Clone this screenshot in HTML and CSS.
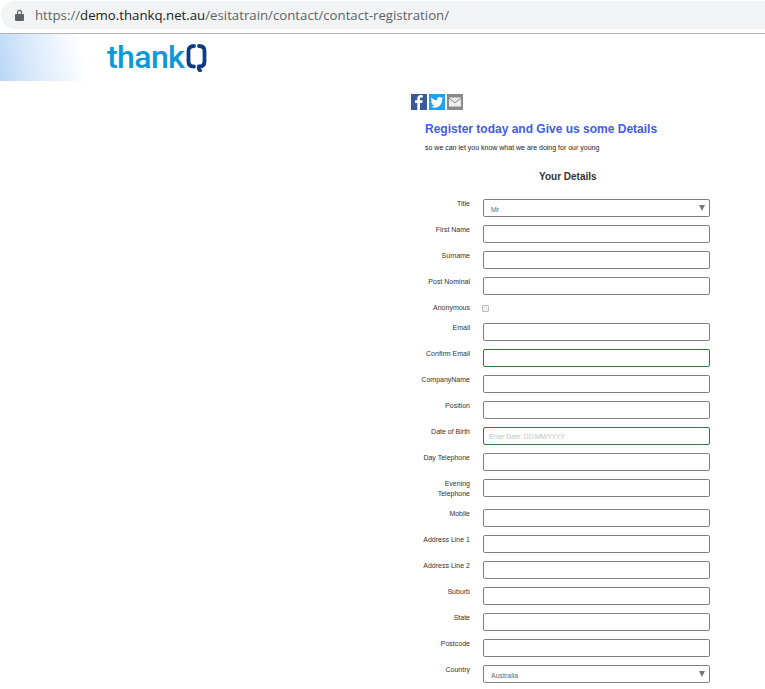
FILE: index.html
```html
<!DOCTYPE html>
<html lang="en">
<head>
<meta charset="utf-8">
<title>Contact Registration</title>
<link rel="stylesheet" href="styles.css">
</head>
<body>
<div class="chrome">
  <div class="omnibox">
    <svg class="lock" width="9" height="12" viewBox="0 0 9 12"><path d="M1 5h7a1 1 0 0 1 1 1v5a1 1 0 0 1-1 1H1a1 1 0 0 1-1-1V6a1 1 0 0 1 1-1zM2 5V3.200a2.500 2.500 0 0 1 5 0V5H5.800V3.200a1.300 1.300 0 0 0-2.600 0V5z" fill="#5f6368"/></svg>
    <span class="url"><span class="dim">https://</span>demo.thankq.net.au<span class="dim">/esitatrain/contact/contact-registration/</span></span>
  </div>
</div>
<header class="band">
  <span class="logo-text">thank</span>
  <svg class="logo-q" width="21" height="29" viewBox="0 0 21 29"><path d="M8 3C4 3 2.500 5 2.500 8v10.500c0 3 1.500 5 5.500 5M13 3c4 0 5.500 2 5.500 5v10.500c0 3-1.500 5-5.500 5-.6 1.500-.2 3 1 4" fill="none" stroke="#0e3a8a" stroke-width="3.800" stroke-linecap="round"/></svg>
</header>
<main class="content">
  <div class="share">
    <span class="share-btn fb"><svg width="16" height="16" viewBox="0 0 16 16"><path d="M9 16V9h2.300l.4-2.700H9V4.800c0-.8.300-1.300 1.300-1.300h1.500V1.200c-.4-.1-1.200-.2-2-.2C7.700 1 6.300 2.200 6.300 4.500v1.800H4V9h2.300v7z" fill="#fff"/></svg></span>
    <span class="share-btn tw"><svg width="16" height="16" viewBox="0 0 16 16"><path d="M14.500 4.200c-.5.200-1 .4-1.500.4.600-.3 1-.8 1.200-1.400-.5.300-1.100.5-1.700.7a2.700 2.700 0 0 0-4.600 2.400C5.700 6.200 3.800 5.200 2.400 3.600c-.7 1.200-.4 2.800.8 3.600-.4 0-.8-.1-1.200-.3 0 1.300.9 2.400 2.100 2.700-.4.100-.8.100-1.200 0 .3 1.100 1.300 1.800 2.500 1.900-1.100.9-2.500 1.300-3.900 1.100 3.900 2.500 11.700 1.100 11.700-7.700.5-.4 1-.9 1.300-1.700z" fill="#fff"/></svg></span>
    <span class="share-btn ml"><svg width="16" height="16" viewBox="0 0 16 16"><path d="M2 3.500h12v9H2z" fill="#eee"/><path d="M2 4.200l6 4.600 6-4.600" fill="none" stroke="#8a8a8a" stroke-width="1"/></svg></span>
  </div>
  <h1 class="headline">Register today and Give us some Details</h1>
  <p class="lead">so we can let you know what we are doing for our young</p>
  <h2 class="section">Your Details</h2>
  <form class="form">
    <label class="lbl">Title</label>
    <div class="field select"><span>Mr</span><i class="arrow"></i></div>
    <label class="lbl">First Name</label>
    <input class="field" type="text">
    <label class="lbl">Surname</label>
    <input class="field" type="text">
    <label class="lbl">Post Nominal</label>
    <input class="field" type="text">
    <label class="lbl">Anonymous</label>
    <div class="check-cell"><span class="check"></span></div>
    <label class="lbl">Email</label>
    <input class="field" type="text">
    <label class="lbl">Confirm Email</label>
    <input class="field ok" type="text">
    <label class="lbl">CompanyName</label>
    <input class="field" type="text">
    <label class="lbl">Position</label>
    <input class="field" type="text">
    <label class="lbl">Date of Birth</label>
    <input class="field ok date" type="text" placeholder="Enter Date: DD/MM/YYYY">
    <label class="lbl">Day Telephone</label>
    <input class="field" type="text">
    <label class="lbl tall">Evening<br>Telephone</label>
    <input class="field" type="text">
    <label class="lbl">Mobile</label>
    <input class="field" type="text">
    <label class="lbl">Address Line 1</label>
    <input class="field" type="text">
    <label class="lbl">Address Line 2</label>
    <input class="field" type="text">
    <label class="lbl">Suburb</label>
    <input class="field" type="text">
    <label class="lbl">State</label>
    <input class="field" type="text">
    <label class="lbl">Postcode</label>
    <input class="field" type="text">
    <label class="lbl">Country</label>
    <div class="field select"><span>Australia</span><i class="arrow"></i></div>
  </form>
</main>
</body>
</html>
```
FILE: styles.css
```css
* { box-sizing: border-box; }
html, body { margin: 0; padding: 0; background: #fff; }
body { width: 765px; height: 689px; overflow: hidden; font-family: "Liberation Sans", Arial, sans-serif; color: #222; }

.chrome { height: 34px; padding: 1px 0 0 1px; border-bottom: 1px solid #b5b5b5; }
.omnibox { height: 28px; background: #f1f3f4; border-radius: 14px 0 0 14px; display: flex; align-items: center; padding-left: 14px; }
.lock { flex: none; margin-right: 11px; }
.url { font-family: "Open Sans", sans-serif; font-size: 13.220px; color: #202124; white-space: nowrap; }
.dim { color: #5f6368; }

.band { height: 47px; display: flex; align-items: flex-start; padding: 0 0 0 107px; background: linear-gradient(78deg, #b9d7f6 0, #d4e6fa 28px, #eaf3fd 58px, #fff 88px) no-repeat; background-size: 88px 100%; }
.logo-text { font-family: "Roboto", sans-serif; font-weight: 500; font-size: 32px; line-height: 47px; letter-spacing: -.6px; color: #0d98d8; }
.logo-q { margin: 9px 0 0 2px; }

.content { padding: 13px 0 0 411px; }
.share { display: flex; gap: 2px; height: 16px; }
.share-btn { width: 16px; height: 16px; display: block; }
.share-btn svg { display: block; }
.fb { background: #3b5998; }
.tw { background: #1da1f2; }
.ml { background: #8a8a8a; }

.headline { margin: 11px 0 0 14px; font-size: 12px; line-height: 16px; font-weight: 700; color: #3f5bf0; }
.lead { margin: 6px 0 0 14px; font-size: 7px; line-height: 10px; color: #222; }
.section { margin: 18px 0 0 0; padding-left: 128px; font-size: 10px; line-height: 12px; font-weight: 700; color: #333; }

.form { margin-top: 16px; display: grid; grid-template-columns: 59px 227px; column-gap: 13px; row-gap: 8px; }
.lbl { font-size: 7px; line-height: 10px; text-align: right; color: #333; white-space: nowrap; }
.lbl.tall { height: 22px; }
.field { width: 227px; height: 18px; border: 1px solid #808080; border-radius: 2px; background: #fff; padding: 0 7px; margin: 0; font: 7px "Liberation Sans", Arial, sans-serif; color: #666; outline: 0; display: block; }
.field::placeholder { color: #c4c4c4; opacity: 1; }
.field.ok { border-color: #2f7a34; }
.field.date { padding-left: 5px; font-size: 6.500px; }
.select { display: flex; align-items: center; justify-content: space-between; padding-top: 2px; }
.arrow { display: block; width: 0; height: 0; margin-top: -3px; margin-right: -3px; border-left: 3.500px solid transparent; border-right: 3.500px solid transparent; border-top: 6px solid #777; }
.check-cell { height: 12px; padding-top: 2px; }
.check { display: block; margin-left: -1px; width: 7px; height: 7px; border: 1px solid #bbb; border-radius: 1px; background: #eee; }
```
